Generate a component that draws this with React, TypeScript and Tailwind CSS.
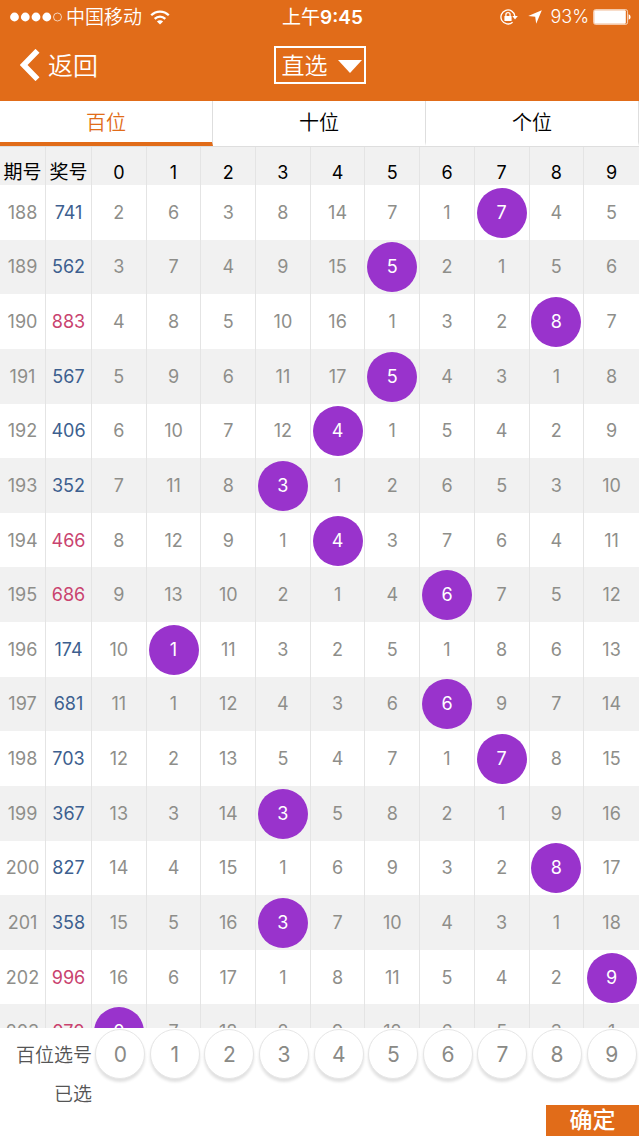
import { useState } from "react";
import clsx from "clsx";

type Draw = { issue: number; code: string; cells: number[] };

const draws: Draw[] = [
  { issue: 188, code: "741", cells: [2, 6, 3, 8, 14, 7, 1, 7, 4, 5] },
  { issue: 189, code: "562", cells: [3, 7, 4, 9, 15, 5, 2, 1, 5, 6] },
  { issue: 190, code: "883", cells: [4, 8, 5, 10, 16, 1, 3, 2, 8, 7] },
  { issue: 191, code: "567", cells: [5, 9, 6, 11, 17, 5, 4, 3, 1, 8] },
  { issue: 192, code: "406", cells: [6, 10, 7, 12, 4, 1, 5, 4, 2, 9] },
  { issue: 193, code: "352", cells: [7, 11, 8, 3, 1, 2, 6, 5, 3, 10] },
  { issue: 194, code: "466", cells: [8, 12, 9, 1, 4, 3, 7, 6, 4, 11] },
  { issue: 195, code: "686", cells: [9, 13, 10, 2, 1, 4, 6, 7, 5, 12] },
  { issue: 196, code: "174", cells: [10, 1, 11, 3, 2, 5, 1, 8, 6, 13] },
  { issue: 197, code: "681", cells: [11, 1, 12, 4, 3, 6, 6, 9, 7, 14] },
  { issue: 198, code: "703", cells: [12, 2, 13, 5, 4, 7, 1, 7, 8, 15] },
  { issue: 199, code: "367", cells: [13, 3, 14, 3, 5, 8, 2, 1, 9, 16] },
  { issue: 200, code: "827", cells: [14, 4, 15, 1, 6, 9, 3, 2, 8, 17] },
  { issue: 201, code: "358", cells: [15, 5, 16, 3, 7, 10, 4, 3, 1, 18] },
  { issue: 202, code: "996", cells: [16, 6, 17, 1, 8, 11, 5, 4, 2, 9] },
  { issue: 203, code: "070", cells: [0, 7, 18, 2, 9, 12, 6, 5, 3, 1] },
];

const digits = [0, 1, 2, 3, 4, 5, 6, 7, 8, 9];
const tabs = ["百位", "十位", "个位"];

const hasRepeat = (code: string) => new Set(code).size < code.length;

function StatusBar() {
  return (
    <div className="grid h-[33px] grid-cols-[1fr_auto_1fr] items-center pr-2 pl-2.5 text-lg leading-8">
      <div className="flex items-center">
        <svg width="52" height="10" viewBox="0 0 52 10" fill="white" aria-hidden="true">
          <circle cx="4.5" cy="5" r="4.4" />
          <circle cx="15.3" cy="5" r="4.4" />
          <circle cx="26" cy="5" r="4.4" />
          <circle cx="36.8" cy="5" r="4.4" />
          <circle cx="47.5" cy="5" r="4" fill="none" stroke="white" strokeWidth="0.7" />
        </svg>
        <span className="ml-1 pt-0.5 text-[19px] font-[350]">中国移动</span>
        <svg className="ml-2" width="20" height="15" viewBox="0 0 20 15" fill="none" stroke="white" strokeWidth="2.3" aria-hidden="true">
          <path d="M1.2 5.3C6.2.4 13.8.4 18.8 5.3" />
          <path d="M4.7 8.8C7.7 5.9 12.3 5.9 15.3 8.8" />
          <path d="M10 14.6 6.9 11.4C8.6 9.7 11.4 9.7 13.1 11.4Z" fill="white" stroke="none" />
        </svg>
      </div>
      <span className="pt-0.5 pl-1 text-[19px] font-semibold">
        <span className="font-normal">上午</span>9:45
      </span>
      <div className="flex items-center justify-end">
        <svg width="18" height="16" viewBox="0 0 18 16" fill="none" stroke="white" strokeWidth="1.3" aria-hidden="true">
          <path d="M12.6 13.2A7 7 0 1 1 14.9 7.2" />
          <path d="M12.3 7H17.8L15 10.4Z" fill="white" stroke="none" />
          <rect x="4.4" y="7" width="7.2" height="5" rx="0.6" fill="white" stroke="none" />
          <path d="M5.9 7.2V5.7a2.1 2.1 0 0 1 4.2 0V7.2" />
        </svg>
        <svg className="ml-2.5" width="14" height="14" viewBox="0 0 14 14" fill="white" aria-hidden="true">
          <path d="M13.8.2 8.2 13.8 7.2 6.8.2 6Z" />
        </svg>
        <span className="ml-2 font-[350]">93%</span>
        <svg className="ml-1" width="38" height="16" viewBox="0 0 38 16" aria-hidden="true">
          <rect x="0.6" y="0.6" width="34" height="14.8" rx="2" fill="none" stroke="white" strokeOpacity="0.7" />
          <rect x="1.2" y="1.2" width="31.6" height="13.6" rx="1" fill="white" />
          <path d="M35.6 5.2C38.2 6 38.2 10 35.6 10.8Z" fill="white" />
        </svg>
      </div>
    </div>
  );
}

function NavBar() {
  return (
    <div className="grid grid-cols-[1fr_auto_1fr] items-center pt-[13px] pb-[17px]">
      <button type="button" className="flex items-center pl-5 text-[25px] leading-9 font-[350]">
        <svg width="20" height="32" viewBox="0 0 20 32" fill="none" stroke="white" strokeWidth="5.6" aria-hidden="true">
          <path d="M17.5 1.8 3.6 16 17.5 30.2" />
        </svg>
        <span className="ml-2 pt-0.5">返回</span>
      </button>
      <div className="relative">
        <select aria-label="玩法" className="block h-[38px] appearance-none border-2 border-white bg-transparent pt-0.5 pr-9 pl-1.5 text-[23px] leading-8 font-[350] outline-none">
          <option>直选</option>
        </select>
        <svg className="pointer-events-none absolute top-3.5 right-1" width="24" height="13" viewBox="0 0 24 13" fill="white" aria-hidden="true">
          <path d="M0 0H24L12 13Z" />
        </svg>
      </div>
    </div>
  );
}

function TrendTable() {
  const line = "border-r border-[#e4e4e4] last:border-r-0";
  const head = clsx(line, "px-0 pt-3.5 pb-0 font-normal whitespace-nowrap");
  const cell = clsx(line, "px-0 pt-px pb-0");
  return (
    <table className="h-[912px] w-full table-fixed border-separate border-spacing-0 text-center text-lg leading-6 text-[#8e8e8a]">
      <colgroup>
        <col className="w-[46px]" />
        <col className="w-[46px]" />
        {digits.map((d) => (
          <col key={d} />
        ))}
      </colgroup>
      <thead>
        <tr className="h-[38px] bg-[#f1f1f1] text-black">
          <th className={clsx(head, "text-[19px]")}>期号</th>
          <th className={clsx(head, "text-[19px]")}>奖号</th>
          {digits.map((d) => (
            <th key={d} className={head}>
              {d}
            </th>
          ))}
        </tr>
      </thead>
      <tbody>
        {draws.map((draw) => (
          <tr key={draw.issue} className="even:bg-[#f1f1f1]">
            <td className={cell}>{draw.issue}</td>
            <td className={clsx(cell, hasRepeat(draw.code) ? "text-[#c9436f]" : "text-[#3d5f8f]")}>{draw.code}</td>
            {draw.cells.map((value, d) => (
              <td key={d} className={cell}>
                {Number(draw.code[0]) === d ? (
                  <span className="mx-auto flex size-[50px] items-center justify-center rounded-full bg-[#9933cc] text-white">
                    {value}
                  </span>
                ) : (
                  value
                )}
              </td>
            ))}
          </tr>
        ))}
      </tbody>
    </table>
  );
}

export default function App() {
  const [tab, setTab] = useState(0);
  const [picked, setPicked] = useState<number[]>([]);

  const toggle = (d: number) =>
    setPicked((p) => (p.includes(d) ? p.filter((x) => x !== d) : [...p, d].sort()));

  return (
    <div className="flex h-screen flex-col bg-white font-['Inter','Noto_Sans_CJK_SC',sans-serif]">
      <header className="bg-[#e16c19] text-white">
        <StatusBar />
        <NavBar />
      </header>

      <div role="tablist" className="grid grid-cols-3 border-b border-[#dedede]">
        {tabs.map((name, i) => (
          <button
            key={name}
            type="button"
            role="tab"
            aria-selected={tab === i}
            onClick={() => setTab(i)}
            className={clsx(
              "h-[45px] border-r border-b-4 border-r-[#dedede] pt-0.5 text-xl leading-6 font-[350]",
              tab === i ? "border-b-[#e16c19] text-[#e16c19]" : "border-b-transparent text-black",
            )}
          >
            {name}
          </button>
        ))}
      </div>

      <main className="min-h-0 flex-1 overflow-y-auto [scrollbar-width:none]">
        <TrendTable />
      </main>

      <footer className="bg-white text-[19px] text-[#555555]">
        <div className="grid grid-cols-[92px_1fr] items-center pt-px">
          <span className="pt-1 text-right font-[350] whitespace-nowrap">{tabs[tab]}选号</span>
          <div className="grid grid-cols-10 justify-items-center pl-px">
            {digits.map((d) => (
              <button
                key={d}
                type="button"
                aria-pressed={picked.includes(d)}
                onClick={() => toggle(d)}
                className={clsx(
                  "size-[50px] rounded-full border border-[#e6e6e6] pt-0.5 text-[21px] shadow-[0_3px_3px_rgba(0,0,0,0.12)]",
                  picked.includes(d) ? "bg-[#9933cc] text-white" : "bg-white text-[#8a8a86]",
                )}
              >
                {d}
              </button>
            ))}
          </div>
        </div>
        <div className="grid grid-cols-[92px_1fr] pt-1.5 leading-5">
          <span className="text-right font-[350]">已选</span>
          <span className="pl-3">{picked.join(" ")}</span>
        </div>
        <div className="flex justify-end">
          <button type="button" className="h-[31px] w-[93px] bg-[#e16c19] text-[23px] leading-[31px] font-medium text-white">
            确定
          </button>
        </div>
      </footer>
    </div>
  );
}
